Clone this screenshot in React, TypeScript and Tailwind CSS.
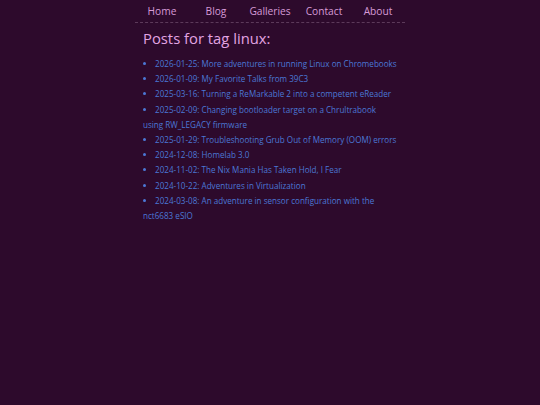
import React from "react";

const posts = [
  "2026-01-25: More adventures in running Linux on Chromebooks",
  "2026-01-09: My Favorite Talks from 39C3",
  "2025-03-16: Turning a ReMarkable 2 into a competent eReader",
  "2025-02-09: Changing bootloader target on a Chrultrabook using RW_LEGACY firmware",
  "2025-01-29: Troubleshooting Grub Out of Memory (OOM) errors",
  "2024-12-08: Homelab 3.0",
  "2024-11-02: The Nix Mania Has Taken Hold, I Fear",
  "2024-10-22: Adventures in Virtualization",
  "2024-03-08: An adventure in sensor configuration with the nct6683 eSIO",
];

const nav = ["Home", "Blog", "Galleries", "Contact", "About"];

export default function App() {
  return (
    <div className="min-h-[405px] bg-[#2d0a2c] font-['Open_Sans',sans-serif]">
      <div className="w-[270px] mx-auto">
        <nav className="grid grid-cols-5 h-[23px] pt-[2px] items-center border-b border-dashed border-[#5c3a5a]">
          {nav.map((n) => (
            <a key={n} className="text-center text-[10.2px] text-[#d69ad6]">
              {n}
            </a>
          ))}
        </nav>
        <div className="px-2">
          <h1 className="text-[14.8px] leading-[24px] text-[#e2a4e2] mt-[3px]">Posts for tag linux:</h1>
          <ul className="list-disc list-inside mt-[6px] text-[8.1px] leading-[15.2px] text-[#4b78d6]">
            {posts.map((p) => (
              <li key={p}>
                <a>{p}</a>
              </li>
            ))}
          </ul>
        </div>
      </div>
    </div>
  );
}
